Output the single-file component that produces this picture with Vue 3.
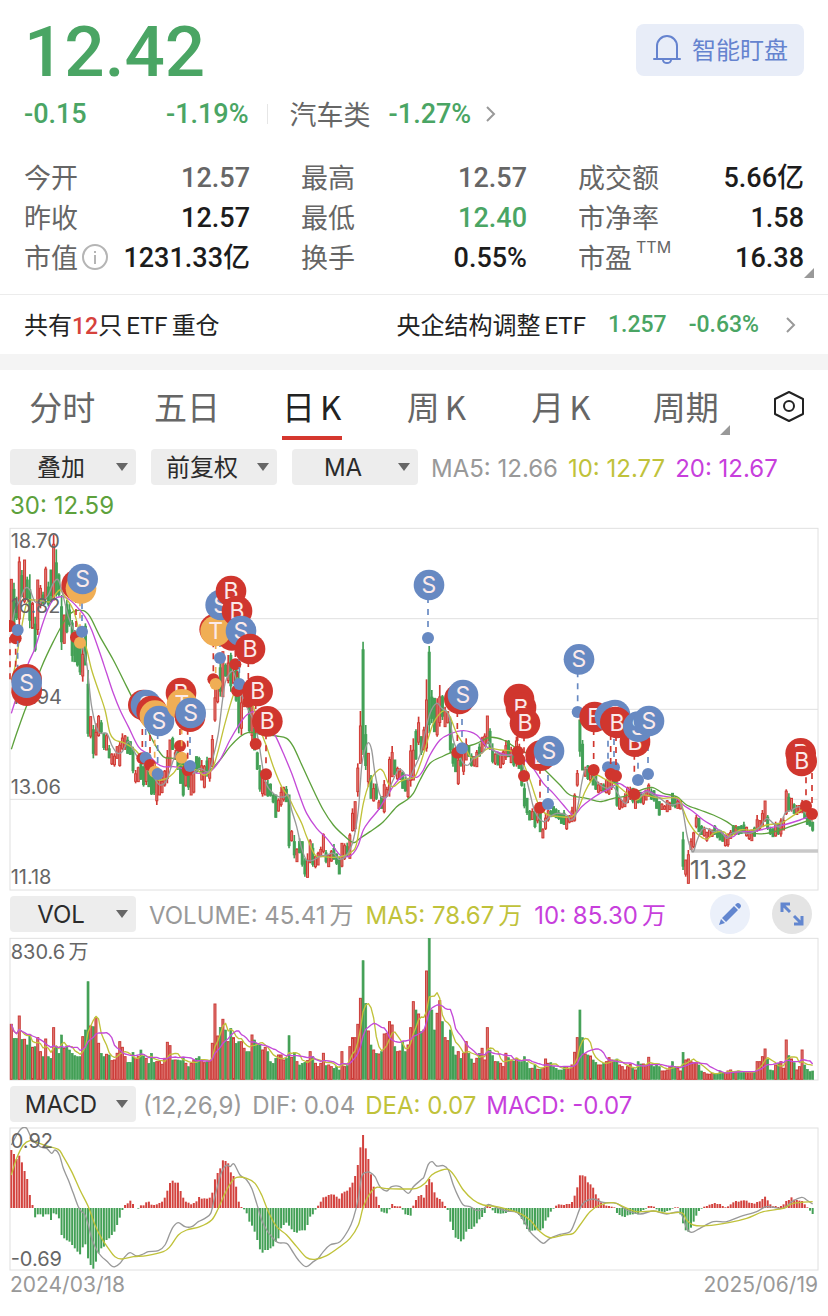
<script setup>
const stats = [
  { label: '今开', value: '12.57', tone: 'muted' },
  { label: '最高', value: '12.57', tone: 'muted' },
  { label: '成交额', value: '5.66亿', tone: 'dark' },
  { label: '昨收', value: '12.57', tone: 'dark' },
  { label: '最低', value: '12.40', tone: 'down' },
  { label: '市净率', value: '1.58', tone: 'dark' },
  { label: '市值', value: '1231.33亿', tone: 'dark', info: true },
  { label: '换手', value: '0.55%', tone: 'dark' },
  { label: '市盈', sup: 'TTM', value: '16.38', tone: 'dark' },
]

const tabs = [
  { label: '分时' },
  { label: '五日' },
  { label: '日', unit: 'K', active: true },
  { label: '周', unit: 'K' },
  { label: '月', unit: 'K' },
  { label: '周期', more: true },
]

// One trading day per slot; all plots share this horizontal scale (3 units per pixel).
const STEP = 7.934
const slotX = (i) => Math.round((34 + i * STEP) * 10) / 10

// r = rising, g = falling; then the high and low of the day in plot units.
const candleText = `
r178-320 g188-330 g230-300 r110-330 g150-230 r120-250 g170-240 g163-325 r245-325 g290-395
r180-345 r195-265 g215-250 r140-240 g185-260 g150-240 r45-240 g88-230 g160-230 g225-390
r285-370 g240-340 g250-320 g300-425 g330-425 g340-440 g370-465 r370-485 g310-435 g450-650
r590-655 g615-715 r610-705 r585-650 g600-640 g640-690 r640-690 g675-715 r700-735 r700-740
r680-715 r665-740 r640-690 r645-690 g650-700 g665-705 g680-760 r750-790 r740-785 g720-780
g740-800 r725-795 g730-800 g760-825 g760-825 r770-855 r760-825 r770-820 r750-800 r690-790
r660-740 g650-690 r690-720 g680-750 g700-790 g730-830 r760-800 g750-810 r760-825 r740-820
g710-760 g710-750 r720-780 r735-805 g710-770 r715-785 r645-740 r505-605 r500-550 g420-530
r395-530 g430-470 r405-490 g398-515 r445-490 g450-545 g455-640 r510-645 r520-560 g520-560
g555-640 r540-665 g600-690 g695-750 g735-815 r770-830 r780-825 g780-830 g790-830 g820-850
g825-892 r835-875 r800-860 r800-845 g798-845 g825-985 r930-965 g945-1015 r985-1025 g955-1000
g965-1040 g1015-1070 r1000-1072 r958-1030 g970-1040 r1010-1045 r995-1035 r980-1010 r940-1000 g990-1030
r1005-1040 r990-1025 g972-1020 g1000-1035 g1010-1062 r970-1042 r970-1020 g968-1010 r940-1015 r865-935
r845-935 r730-830 r573-730 g365-705 g615-750 r700-800 g765-835 r790-845 g790-840 r840-870
g830-865 r780-880 r800-830 r710-830 r678-770 g720-765 r740-780 r745-780 g755-805 g770-815
r780-835 r675-800 r655-780 g628-720 r590-675 g650-705 r620-690 r478-695 g378-640 g510-610
g535-635 r535-650 r495-620 g525-600 r560-620 r575-610 g590-700 g670-740 g690-755 r700-795
g700-740 r690-765 r655-720 g675-710 g700-740 r710-740 r690-740 g670-710 r650-700 r640-680
r588-670 g625-690 g670-730 r700-735 g695-735 r700-745 r690-735 r660-720 g660-710 r680-730
g690-740 r650-740 g680-745 g720-800 g790-865 g835-885 g870-900 r865-900 g870-925 r860-910
g860-935 r925-955 r880-930 r870-905 g870-890 g860-890 g865-895 g870-900 g880-910 g870-915
r890-930 r885-910 r860-905 r820-905 r750-800 g600-710 g660-750 r740-770 g735-780 r755-785
g750-795 g760-810 r785-820 r790-815 g790-815 r780-820 r775-825 r760-810 g740-790 g770-860
r835-870 r840-865 r820-860 r800-850 r800-840 g805-850 r830-865 g810-850 g815-850 r820-855
r810-840 r790-830 g805-840 g810-845 g825-865 g845-887 r850-870 r855-870 r840-875 r845-870
g820-860 g830-865 r835-865 r840-868 g935-1050 r1020-1070 r990-1090 r955-990 r935-985 r885-925
g895-935 g915-945 r920-950 r935-965 r925-950 r930-950 g915-945 g930-955 g930-960 g935-965
r945-980 r940-980 r930-955 g915-945 r915-945 g920-945 g915-940 g905-940 r920-950 r930-960
r930-962 g920-950 r885-935 r900-930 r870-920 r843-905 g885-930 g920-945 g925-950 r905-950
g910-945 r895-950 r890-930 r808-885 g820-875 r835-875 g850-880 r855-885 r855-880 r840-880
g850-895 g870-915 g890-920 g905-935`

const candles = candleText.trim().split(/\s+/).map((token, i) => {
  const [high, low] = token.slice(1).split('-').map(Number)
  const range = low - high
  const bodyTop = high + range * (((i * 37) % 5) / 14)
  const bodyEnd = low - range * (((i * 53) % 4) / 20)
  return { x: slotX(i), up: token[0] === 'r', high, low, bodyTop, body: bodyEnd - bodyTop }
})

const numbers = (text) => text.trim().split(/[\s,]+/).map(Number)

const VOLUME_BASE = 568
const volumeTops = numbers(`
403 445 445 378 448 448 465 435 472 470 443 485 500 447 500 505 413 470 490 435 475 468 480 490 497
500 500 440 420 275 408 410 383 460 490 500 493 495 512 510 490 455 472 500 517 517 487 505 500 480
498 505 520 490 517 515 515 523 505 457 467 510 510 510 512 505 520 530 520 510 505 500 510 518 515
515 460 342 438 412 388 420 455 415 443 460 455 455 475 485 485 435 450 460 465 480 472 485 515 520
505 495 495 510 505 437 502 487 515 525 520 517 512 485 500 520 530 520 490 527 525 530 535 530 540
485 530 527 470 443 443 403 325 212 340 423 465 480 490 492 485 432 430 395 405 470 485 483 455 485
465 413 335 360 372 425 420 243 145 360 420 370 332 395 443 452 420 470 495 485 505 490 455 490 507
520 505 490 475 510 413 480 497 515 515 520 530 490 503 510 513 505 515 515 500 518 535 535 525 538
538 535 507 520 518 530 535 540 540 530 530 535 525 487 443 360 443 492 495 498 510 517 525 525 520
515 503 510 510 507 525 530 540 530 523 535 540 515 522 522 525 502 525 530 522 530 543 543 540 530
515 530 535 543 487 510 507 515 518 518 525 543 548 552 553 550 550 550 543 548 548 543 540 545 545
543 548 545 548 545 545 545 515 515 500 477 508 540 542 525 520 515 535 450 497 507 518 540 530 480
525 538 545 543`)
const volumeBars = volumeTops.map((top, i) => ({
  x: slotX(i),
  top,
  height: VOLUME_BASE - top,
  up: candles[i] ? candles[i].up : false,
}))

const averageLine = (values, days) =>
  values
    .map((_, i) => {
      const part = values.slice(Math.max(0, i - days + 1), i + 1)
      return `${slotX(i)},${Math.round(part.reduce((a, b) => a + b, 0) / part.length)}`
    })
    .join(' ')
const volumeMa5 = averageLine(volumeTops, 5)
const volumeMa10 = averageLine(volumeTops, 10)

const MACD_ZERO = 369
const macdBars = numbers(`
195 207 222 212 232 258 282 330 360 397 388 388 395 388 388 405 385 388 400 450 460 466 470 480 490
500 508 487 478 520 540 551 530 505 490 485 465 460 450 440 420 398 375 360 355 347 357 369 371 361
361 352 350 359 360 358 354 350 338 317 294 287 293 293 318 338 350 353 358 354 349 336 341 340 341
338 323 283 264 250 226 228 235 262 273 305 350 366 373 385 410 422 440 465 493 503 495 495 490 484
470 460 430 420 413 422 433 441 443 437 436 436 420 395 388 374 362 350 337 335 330 328 329 335 341
325 320 317 307 293 273 240 187 150 190 222 268 305 335 360 380 383 385 373 357 363 364 364 374 388
390 392 362 345 333 330 338 300 282 292 322 338 342 350 363 375 410 435 458 462 469 463 440 432 432
425 415 403 396 384 363 366 376 384 385 386 385 384 380 378 381 382 390 402 418 432 440 437 436 436
436 430 407 397 380 371 362 358 359 360 357 357 351 332 307 271 271 274 292 298 308 328 340 352 358
362 363 365 367 384 390 394 396 391 389 388 386 388 380 375 371 363 363 365 373 378 380 381 378 376
371 367 367 388 415 436 440 428 410 392 378 371 365 363 359 357 354 357 357 363 367 364 358 352 348
350 347 346 347 353 354 356 351 349 342 335 346 358 364 363 366 363 358 348 345 337 344 345 347 348
358 367 377 387`).map((value, i) => ({
  x: slotX(i),
  y: Math.min(value, MACD_ZERO),
  height: Math.abs(value - MACD_ZERO),
  up: value < MACD_ZERO,
}))

// Smooth curve through the given points.
function curve(text) {
  const flat = numbers(text)
  const p = []
  for (let i = 0; i < flat.length; i += 2) p.push([flat[i], flat[i + 1]])
  let d = `M${p[0][0]} ${p[0][1]}`
  for (let i = 0; i < p.length - 1; i++) {
    const a = p[i - 1] || p[i]
    const b = p[i]
    const c = p[i + 1]
    const e = p[i + 2] || c
    const k = (n) => Math.round(n * 10) / 10
    d += `C${k(b[0] + (c[0] - a[0]) / 6)} ${k(b[1] + (c[1] - a[1]) / 6)} ${k(c[0] - (e[0] - b[0]) / 6)} ${k(c[1] - (e[1] - b[1]) / 6)} ${c[0]} ${c[1]}`
  }
  return d
}

const priceLines = [
  {
    name: 'ma30',
    d: curve(`34,688 50,640 75,570 95,520 125,440 160,365 195,300 220,275 250,272 270,290 300,350 340,420 380,500 420,580
460,665 490,710 520,715 550,725 575,740 600,755 630,750 660,720 690,680 720,650 745,637 770,640 790,645 830,648 860,655
880,680 910,745 940,810 970,870 1000,915 1030,945 1060,968 1080,955 1110,935 1150,905 1190,860 1220,840 1240,820 1260,780
1290,730 1330,708 1360,695 1400,680 1430,670 1470,652 1510,660 1550,685 1590,705 1620,735 1650,765 1680,795 1710,825
1760,835 1800,845 1840,835 1870,830 1910,815 1955,802 1990,820 2030,830 2060,855 2100,870 2140,885 2180,905 2210,925
2260,940 2300,940 2340,930 2370,920 2400,910 2430,900`),
  },
  {
    name: 'ma20',
    d: curve(`34,580 50,530 70,480 85,430 105,385 125,320 145,265 160,240 185,230 210,240 235,265 255,290 275,330 300,400
320,460 340,520 360,570 385,620 415,680 440,700 470,730 490,740 520,740 545,745 575,755 600,760 630,755 660,720 690,660
720,610 740,585 760,575 790,580 815,630 830,655 850,700 875,760 900,830 920,880 950,925 980,955 1000,980 1020,1005
1045,1010 1060,1000 1075,975 1090,930 1110,900 1135,870 1160,830 1190,785 1215,765 1250,772 1270,750 1290,705 1320,660
1350,642 1390,632 1430,645 1460,680 1490,695 1520,705 1550,705 1580,725 1600,745 1630,790 1660,820 1690,855 1720,885
1745,860 1770,840 1800,820 1830,805 1855,790 1875,800 1910,825 1940,812 1970,825 2000,830 2030,835 2050,855 2080,875
2110,900 2150,925 2180,950 2200,950 2220,935 2260,935 2300,925 2350,915 2400,900 2438,885`),
  },
  {
    name: 'ma10',
    d: curve(`34,480 45,440 60,350 80,250 100,240 130,243 150,245 165,225 180,210 195,230 220,270 240,340 258,380 275,450
295,510 315,570 330,640 345,660 370,668 400,685 420,705 440,715 455,760 475,780 500,775 520,760 540,735 560,745 590,750
610,765 625,760 640,740 655,690 675,610 700,525 720,480 735,500 760,560 785,640 800,680 820,740 845,800 865,830 885,870
905,910 920,950 945,1005 970,1010 1000,1012 1030,1008 1055,995 1070,970 1090,850 1110,785 1135,750 1150,755 1165,790
1180,800 1200,785 1225,775 1245,770 1265,720 1280,670 1300,610 1320,580 1335,572 1350,590 1370,640 1395,680 1410,710
1425,715 1445,700 1465,685 1500,690 1530,692 1555,705 1570,730 1590,780 1610,840 1625,870 1645,885 1680,890 1715,890
1735,865 1755,815 1775,780 1790,765 1810,775 1830,785 1850,795 1880,820 1910,840 1930,825 1955,830 1990,835 2035,835
2050,870 2065,905 2090,940 2120,958 2140,940 2170,935 2190,950 2220,930 2260,930 2300,915 2340,910 2360,900 2390,880
2410,870 2438,905`),
  },
  {
    name: 'ma5',
    d: curve(`34,330 45,270 60,240 75,205 90,210 105,245 125,245 145,225 160,190 175,180 190,230 205,290 225,340 245,375
260,430 275,560 295,635 320,640 335,675 350,698 365,697 385,665 400,690 415,715 435,740 460,770 480,795 500,780 520,720
535,690 550,720 575,760 600,745 625,755 640,710 655,640 665,560 675,490 685,465 700,455 715,500 740,560 760,600 775,660
795,780 815,815 835,830 855,830 865,825 875,870 890,920 905,985 920,1020 940,1020 960,1008 980,1005 1000,1000 1018,1018
1040,1005 1060,960 1075,870 1085,740 1095,690 1105,668 1115,690 1125,760 1140,825 1160,830 1175,790 1195,750 1210,755
1225,780 1240,750 1260,705 1275,640 1290,580 1310,550 1325,565 1340,575 1350,600 1360,660 1375,700 1390,730 1405,735
1420,715 1450,695 1465,665 1480,690 1500,705 1530,705 1555,700 1575,760 1590,820 1605,875 1630,905 1650,890 1670,880
1700,885 1710,900 1725,890 1735,850 1745,790 1757,745 1775,760 1795,790 1820,805 1840,800 1865,840 1878,850 1890,830
1920,830 1940,815 1960,825 1980,835 2000,850 2020,855 2040,850 2050,880 2060,940 2070,980 2080,995 2090,965 2105,930
2120,925 2140,935 2160,930 2180,955 2195,940 2220,935 2250,940 2280,920 2300,895 2320,910 2340,920 2355,880 2375,870
2400,860 2420,885 2438,905`),
  },
]

const dif = curve(`34,180 50,150 65,130 80,130 95,160 120,185 140,190 155,205 165,195 178,210 190,250 205,285 220,325
235,365 245,380 255,390 265,420 275,460 290,495 305,515 320,528 335,543 345,545 360,535 375,515 390,503 410,513 430,507
445,500 475,497 495,480 510,445 520,425 535,413 555,425 575,425 595,410 615,400 632,385 642,345 655,295 665,260 680,240
690,245 702,237 720,270 740,285 755,310 770,355 785,405 800,435 815,455 835,473 860,475 875,495 895,525 918,545 940,530
955,520 970,500 990,480 1020,470 1045,435 1060,400 1075,340 1085,275 1098,262 1110,262 1125,275 1140,305 1160,318
1175,305 1200,305 1225,325 1240,305 1265,283 1272,275 1285,238 1297,230 1310,243 1330,242 1345,255 1360,300 1375,335
1390,360 1410,365 1430,376 1450,372 1465,358 1490,368 1520,378 1550,382 1570,405 1590,440 1610,460 1630,475 1650,460
1680,448 1710,440 1725,410 1740,370 1755,350 1780,342 1810,352 1850,355 1880,375 1920,387 1960,378 2000,387 2040,383
2060,430 2075,442 2100,430 2140,410 2180,410 2220,395 2270,380 2300,365 2350,370 2375,350 2405,337 2420,345 2438,357`)
const dea = curve(`34,270 50,220 70,180 90,167 110,172 140,183 175,193 190,215 215,260 240,315 265,365 285,420 305,460
325,490 345,515 365,522 400,515 440,512 490,500 510,485 535,450 560,435 600,425 635,405 655,370 675,325 695,290 710,277
740,280 765,295 785,330 805,380 830,425 860,450 890,485 920,518 945,523 980,512 1020,485 1050,460 1075,420 1090,365
1110,325 1130,307 1160,311 1210,312 1250,310 1275,295 1295,270 1320,257 1345,253 1365,275 1390,315 1420,345 1450,360
1490,365 1530,375 1560,385 1590,405 1620,440 1650,458 1690,450 1720,445 1740,420 1770,380 1800,360 1840,353 1870,365
1910,380 1960,378 2000,385 2045,383 2060,405 2080,420 2120,422 2190,412 2240,400 2290,380 2350,370 2380,355 2438,350`)

// Trade pins: kind, pin centre, dot centre. Lower case marks a pin whose letter lies under another pin.
const trades = [
  ['b', 80, 478, 30, 318],
  ['b', 80, 512, 47, 355],
  ['S', 80, 488, 53, 330],
  ['b', 230, 195, 228, 352],
  ['t', 243, 205, 240, 368],
  ['S', 248, 177, 246, 335],
  ['b', 430, 555, 427, 715],
  ['S', 438, 555, 437, 713],
  ['b', 455, 573, 450, 735],
  ['t', 465, 587, 464, 755],
  ['S', 477, 603, 473, 762],
  ['B', 543, 519, 540, 678],
  ['T', 546, 553, 545, 713],
  ['b', 570, 590, 563, 750],
  ['S', 572, 579, 570, 738],
  ['b', 644, 328, 640, 478],
  ['b', 696, 346, 712, 512],
  ['T', 647, 333, 647, 492],
  ['S', 662, 255, 660, 414],
  ['B', 693, 213, 706, 433],
  ['B', 711, 273, 712, 512],
  ['S', 723, 333, 718, 492],
  ['B', 750, 387, 745, 545],
  ['B', 773, 513, 767, 672],
  ['B', 802, 604, 798, 763],
  ['S', 1287, 195, 1284, 354],
  ['b', 1378, 537, 1372, 698],
  ['S', 1389, 525, 1386, 685],
  ['b', 1557, 537, 1553, 695],
  ['B', 1563, 563, 1558, 718],
  ['B', 1575, 610, 1572, 768],
  ['B', 1622, 707, 1620, 863],
  ['S', 1647, 693, 1644, 852],
  ['S', 1737, 418, 1733, 576],
  ['B', 1784, 591, 1781, 750],
  ['s', 1830, 590, 1824, 742],
  ['S', 1845, 585, 1842, 742],
  ['b', 1846, 606, 1832, 762],
  ['B', 1851, 609, 1848, 768],
  ['B', 1905, 665, 1903, 823],
  ['S', 1915, 620, 1914, 780],
  ['S', 1947, 603, 1944, 762],
  ['B', 2402, 700, 2418, 858],
  ['B', 2405, 723, 2436, 882],
].map(([code, x, y, dotX, dotY]) => {
  const kind = code.toUpperCase()
  return { kind, letter: code === kind ? kind : '', x, y, dotX, dotY }
})

const gridLines = [296, 568, 838]
const priceLabels = [
  { text: '18.70', y: 84 },
  { text: '16.82', y: 280 },
  { text: '14.94', y: 551 },
  { text: '13.06', y: 822 },
  { text: '11.18', y: 1092 },
]
</script>

<template>
  <main class="page">
    <header class="quote">
      <div class="headline">
        <h1 class="price">12.42</h1>
        <button class="watch" type="button">
          <svg width="30" height="32" viewBox="0 0 30 32" fill="none" stroke="currentColor" stroke-width="2">
            <path d="M2 25H28M5 25V12a10 10 0 0 1 20 0V25" stroke-linecap="round" />
            <path d="M11 26a4 3 0 0 0 8 0" />
          </svg>
          <span>智能盯盘</span>
        </button>
      </div>

      <div class="change">
        <span class="num down change-value">-0.15</span>
        <span class="num down">-1.19%</span>
        <a class="sector" href="#">
          <span>汽车类</span>
          <span class="num down">-1.27%</span>
          <svg class="chevron" width="12" height="18" viewBox="0 0 12 18"><path d="M2 2l7 7-7 7" /></svg>
        </a>
      </div>

      <dl class="stats">
        <div v-for="item in stats" :key="item.label" class="stat">
          <dt>
            {{ item.label }}<sup v-if="item.sup">{{ item.sup }}</sup>
            <svg v-if="item.info" class="info" width="26" height="26" viewBox="0 0 26 26">
              <circle cx="13" cy="13" r="12" />
              <path d="M13 11v9M13 7v2" />
            </svg>
          </dt>
          <dd class="num" :class="item.tone">{{ item.value }}</dd>
        </div>
        <i class="corner stats-corner"></i>
      </dl>
    </header>

    <a class="etf" href="#">
      <span class="etf-text">共有<b class="num up">12</b>只<span class="latin">ETF</span>重仓</span>
      <span class="etf-text etf-name">央企结构调整<span class="latin">ETF</span></span>
      <span class="num down etf-price">1.257</span>
      <span class="num down etf-rate">-0.63%</span>
      <svg class="chevron" width="12" height="18" viewBox="0 0 12 18"><path d="M2 2l7 7-7 7" /></svg>
    </a>

    <nav class="tabs">
      <button v-for="tab in tabs" :key="tab.label" type="button" class="tab" :class="{ active: tab.active }">
        {{ tab.label }}<span v-if="tab.unit" class="tab-unit">{{ tab.unit }}</span>
        <i v-if="tab.more" class="corner tab-corner"></i>
      </button>
      <button type="button" class="settings" aria-label="设置">
        <svg width="32" height="34" viewBox="0 0 32 34" fill="none" stroke="#222" stroke-width="2" stroke-linejoin="round">
          <path d="M17 3L31 10V25L17 32L3 25V10Z" />
          <circle cx="17" cy="17" r="5" />
        </svg>
      </button>
    </nav>

    <section class="charts">
      <div class="toolbar">
        <label class="picker"><select aria-label="叠加"><option>叠加</option></select></label>
        <label class="picker"><select aria-label="复权"><option>前复权</option></select></label>
        <label class="picker"><select aria-label="主图指标"><option>MA</option></select></label>
        <div class="legend">
          <span class="c-gray">MA5: 12.66</span>
          <span class="c-yellow">10: 12.77</span>
          <span class="c-purple">20: 12.67</span>
        </div>
      </div>
      <div class="legend legend-line"><span class="c-green">30: 12.59</span></div>

      <svg class="plot" viewBox="27 21 2430 1092" role="img" aria-label="日K线图">
        <path v-for="y in gridLines" :key="y" class="grid" :d="`M30 ${y}H2454`" />
        <rect class="frame" x="30" y="25" width="2424" height="1085" />
        <path class="low-line" d="M2072 993H2454" />
        <g v-for="c in candles" :key="c.x" :class="c.up ? 'rise' : 'fall'">
          <path class="wick" :d="`M${c.x} ${c.high}V${c.low}`" />
          <rect class="body" :x="c.x - 3" :y="c.bodyTop" width="6" :height="c.body" />
        </g>
        <path v-for="line in priceLines" :key="line.name" class="line" :class="line.name" :d="line.d" />
        <text v-for="label in priceLabels" :key="label.text" class="axis" x="32" :y="label.y">{{ label.text }}</text>
        <text class="low-label" x="2069" y="1076">11.32</text>
        <g v-for="(t, i) in trades" :key="'d' + i" :class="'pin-' + t.kind">
          <path class="leader" :d="`M${t.dotX} ${t.y}V${t.dotY}`" />
          <circle :cx="t.dotX" :cy="t.dotY" r="18" />
        </g>
        <g v-for="(t, i) in trades" :key="'p' + i" :class="'pin-' + t.kind">
          <circle :cx="t.x" :cy="t.y" r="46" />
          <text v-if="t.letter" class="pin-text" :x="t.x" :y="t.y + 24">{{ t.letter }}</text>
        </g>
      </svg>

      <div class="toolbar sub">
        <label class="picker"><select aria-label="成交量指标"><option>VOL</option></select></label>
        <div class="legend volume-legend">
          <span class="c-gray">VOLUME: 45.41<span class="unit">万</span></span>
          <span class="c-yellow">MA5: 78.67<span class="unit">万</span></span>
          <span class="c-purple">10: 85.30<span class="unit">万</span></span>
        </div>
        <div class="tools">
          <button type="button" class="round draw" aria-label="画线">
            <svg width="24" height="24" viewBox="0 0 24 24" fill="currentColor">
              <path d="M1 23L3 17L7 21ZM4 16L16 4L20 8L8 20ZM17 3L18 2Q20 0 22 2Q24 4 22 6L21 7Z" />
            </svg>
          </button>
          <button type="button" class="round expand" aria-label="全屏">
            <svg width="24" height="24" viewBox="0 0 24 24" fill="none" stroke="currentColor" stroke-width="3">
              <path d="M2 10V2H10M2 2L10 10M22 14V22H14M22 22L14 14" />
            </svg>
          </button>
        </div>
      </div>

      <svg class="plot" viewBox="27 141 2430 432" role="img" aria-label="成交量">
        <rect class="frame" x="30" y="145" width="2424" height="425" />
        <rect
          v-for="b in volumeBars"
          :key="b.x"
          :class="b.up ? 'vol-up' : 'vol-down'"
          :x="b.x - 3"
          :y="b.top"
          width="6"
          :height="b.height"
        />
        <polyline class="line ma10" :points="volumeMa5" />
        <polyline class="line ma20" :points="volumeMa10" />
        <text class="axis" x="32" y="207">830.6<tspan dx="10">万</tspan></text>
      </svg>

      <div class="toolbar sub">
        <label class="picker"><select aria-label="副图指标"><option>MACD</option></select></label>
        <div class="legend macd-legend">
          <span class="c-gray">(12,26,9)</span>
          <span class="c-gray">DIF: 0.04</span>
          <span class="c-yellow">DEA: 0.07</span>
          <span class="c-purple">MACD: -0.07</span>
        </div>
      </div>

      <svg class="plot" viewBox="27 126 2430 432" role="img" aria-label="MACD">
        <rect class="frame" x="30" y="129" width="2424" height="426" />
        <rect
          v-for="b in macdBars"
          :key="b.x"
          :class="b.up ? 'macd-up' : 'macd-down'"
          :x="b.x - 3"
          :y="b.y"
          width="6"
          :height="b.height"
        />
        <path class="line ma5" :d="dif" />
        <path class="line ma10" :d="dea" />
        <text class="axis" x="32" y="189">0.92</text>
        <text class="axis" x="32" y="543">-0.69</text>
      </svg>

      <div class="dates">
        <time datetime="2024-03-18">2024/03/18</time>
        <time datetime="2025-06-19">2025/06/19</time>
      </div>
    </section>
  </main>
</template>

<style>
body {
  margin: 0;
  background: #fff;
}
</style>

<style scoped>
.page {
  background: #fff;
  color: #222;
  font-family: 'Noto Sans CJK SC', 'Noto Sans', sans-serif;
}
button,
select {
  margin: 0;
  border: 0;
  padding: 0;
  background: none;
  color: inherit;
  font-family: inherit;
}
a {
  color: inherit;
  text-decoration: none;
}
.num {
  font-family: Roboto, 'Noto Sans CJK SC', sans-serif;
  font-weight: 500;
}
.down { color: #4aa564; }
.up { color: #d6423c; }
.dark { color: #1c1c1c; }
.muted { color: #666; }

.quote {
  padding: 24px 24px 16px;
}
.headline {
  display: flex;
  justify-content: space-between;
  align-items: center;
  height: 52px;
}
.price {
  margin: 0;
  padding-top: 4px;
  color: #4aa564;
  font-family: Roboto, sans-serif;
  font-size: 71px;
  font-weight: 500;
  line-height: 52px;
}
.watch {
  display: flex;
  align-items: center;
  gap: 10px;
  height: 52px;
  padding: 0 16px;
  border-radius: 8px;
  background: #e8edf8;
  color: #6583cf;
  font-size: 24px;
}
.watch span {
  padding-bottom: 4px;
}
.change {
  display: flex;
  align-items: center;
  height: 40px;
  margin-top: 18px;
  font-size: 27px;
}
.change-value {
  width: 142px;
}
.sector {
  display: flex;
  align-items: center;
  gap: 18px;
  margin-left: 18px;
  padding-left: 22px;
  border-left: 1px solid #e6e6e6;
  color: #666;
  line-height: 20px;
}
.chevron {
  fill: none;
  stroke: #999;
  stroke-width: 2;
}
.sector .chevron {
  margin-left: -4px;
}
.stats {
  position: relative;
  display: grid;
  grid-template-columns: repeat(3, 1fr);
  column-gap: 51px;
  margin: 24px 0 0;
}
.stat {
  display: flex;
  justify-content: space-between;
  align-items: center;
  height: 40px;
  font-size: 27px;
  line-height: 40px;
}
.stat dt {
  display: flex;
  align-items: center;
  gap: 4px;
  padding-bottom: 2px;
  color: #666;
}
.stat dd {
  margin: 0;
}
.stat sup {
  align-self: flex-start;
  font-family: Inter, sans-serif;
  font-size: 16px;
  line-height: 20px;
}
.info {
  fill: none;
  stroke: #b5b5b5;
  stroke-width: 2;
}
.corner {
  position: absolute;
  width: 10px;
  height: 10px;
  background: #999;
  clip-path: polygon(100% 0, 100% 100%, 0 100%);
}
.stats-corner {
  right: -10px;
  bottom: 0;
}

.etf {
  display: flex;
  align-items: center;
  height: 59px;
  padding: 0 31px 0 24px;
  border-top: 1px solid #ececec;
  border-bottom: 16px solid #f4f4f4;
  font-size: 24px;
}
.etf-text {
  padding-bottom: 2px;
}
.etf .num {
  font-size: 23px;
}
.latin {
  margin: 0 4px;
  font-family: Roboto, sans-serif;
}
.etf-name {
  margin-left: auto;
}
.etf-price { margin-left: 18px; }
.etf-rate { margin-left: 22px; }
.etf .chevron { margin-left: 26px; }

.tabs {
  display: flex;
  height: 70px;
}
.tab {
  position: relative;
  flex: 1;
  padding-top: 2px;
  color: #666;
  font-size: 33px;
}
.tab-unit {
  margin-left: 5px;
}
.tab.active {
  color: #222;
}
.tab.active::after {
  content: '';
  position: absolute;
  left: 50%;
  bottom: 0;
  width: 60px;
  height: 4px;
  margin-left: -30px;
  background: #d5372e;
}
.tab-corner {
  right: 18px;
  bottom: 5px;
}
.settings {
  flex: 0 0 80px;
  padding-top: 2px;
}
.settings svg {
  vertical-align: middle;
}

.charts {
  padding: 9px 9px 0;
  font-family: Inter, 'Noto Sans CJK SC', sans-serif;
}
.toolbar {
  display: flex;
  align-items: center;
  gap: 15px;
  height: 36px;
  padding-left: 1px;
}
.toolbar.sub {
  height: 46px;
}
.picker {
  position: relative;
  flex: 0 0 126px;
  height: 36px;
}
.picker::after {
  content: '';
  position: absolute;
  top: 14px;
  right: 8px;
  width: 12px;
  height: 8px;
  background: #666;
  clip-path: polygon(0 0, 100% 0, 50% 100%);
  pointer-events: none;
}
.picker select {
  width: 126px;
  height: 36px;
  padding-right: 24px;
  border-radius: 4px;
  background: #ededed;
  color: #2b2b2b;
  font-size: 24px;
  text-align: center;
  text-align-last: center;
  appearance: none;
}
.legend {
  display: flex;
  gap: 10px;
  margin-left: -2px;
  padding-top: 3px;
  font-size: 24px;
  line-height: 36px;
  white-space: nowrap;
}
.legend-line {
  margin-left: 1px;
  padding-top: 0;
  line-height: 42px;
}
.volume-legend {
  gap: 12px;
}
.unit {
  margin-left: 4px;
}
.macd-legend {
  margin-left: -8px;
}
.c-gray { color: #999; }
.c-yellow { color: #c0c23a; }
.c-purple { color: #c73fdc; }
.c-green { color: #5da13c; }

.tools {
  display: flex;
  gap: 22px;
  margin-left: auto;
  padding-right: 7px;
}
.round {
  display: flex;
  align-items: center;
  justify-content: center;
  width: 40px;
  height: 40px;
  border-radius: 50%;
  color: #6286cf;
}
.draw { background: #ebf0fa; }
.expand { background: #e4e4e4; }

.plot {
  display: block;
  width: 100%;
  font-family: Inter, 'Noto Sans CJK SC', sans-serif;
}
.grid,
.frame {
  fill: none;
  stroke: #e0e0e0;
  stroke-width: 3;
}
.low-line {
  stroke: #c9c9c9;
  stroke-width: 10;
}
.rise .wick { stroke: #d13a34; }
.fall .wick { stroke: #43a056; }
.wick { stroke-width: 5; }
.body { stroke-width: 3; }
.rise .body { stroke: #d13a34; fill: #dd7f7a; }
.fall .body { stroke: #43a056; fill: #43a056; }
.line {
  fill: none;
  stroke-width: 4;
  stroke-linejoin: round;
}
.ma5 { stroke: #999; }
.ma10 { stroke: #c0c23a; }
.ma20 { stroke: #c44bd8; }
.ma30 { stroke: #5da13c; }
.axis {
  fill: #666;
  font-size: 60px;
}
.low-label {
  fill: #666;
  font-size: 75px;
}
.leader {
  fill: none;
  stroke-width: 5;
  stroke-dasharray: 18 18;
}
.pin-B { fill: #d0362e; stroke: #d0362e; }
.pin-S { fill: #6789c2; stroke: #6789c2; }
.pin-T { fill: #f0ae55; stroke: #f0ae55; }
.pin-B circle,
.pin-S circle,
.pin-T circle {
  stroke: none;
}
.pin-text {
  fill: #fbeaea;
  stroke: none;
  font-size: 69px;
  text-anchor: middle;
}
.vol-up { fill: #df7b77; stroke: #cb3b37; stroke-width: 3; }
.vol-down { fill: #43a056; stroke: #43a056; stroke-width: 2; }
.macd-up { fill: #d3423e; }
.macd-down { fill: #43a056; }

.dates {
  display: flex;
  justify-content: space-between;
  padding: 0 1px;
  color: #999;
  font-size: 21px;
  line-height: 28px;
}
</style>
